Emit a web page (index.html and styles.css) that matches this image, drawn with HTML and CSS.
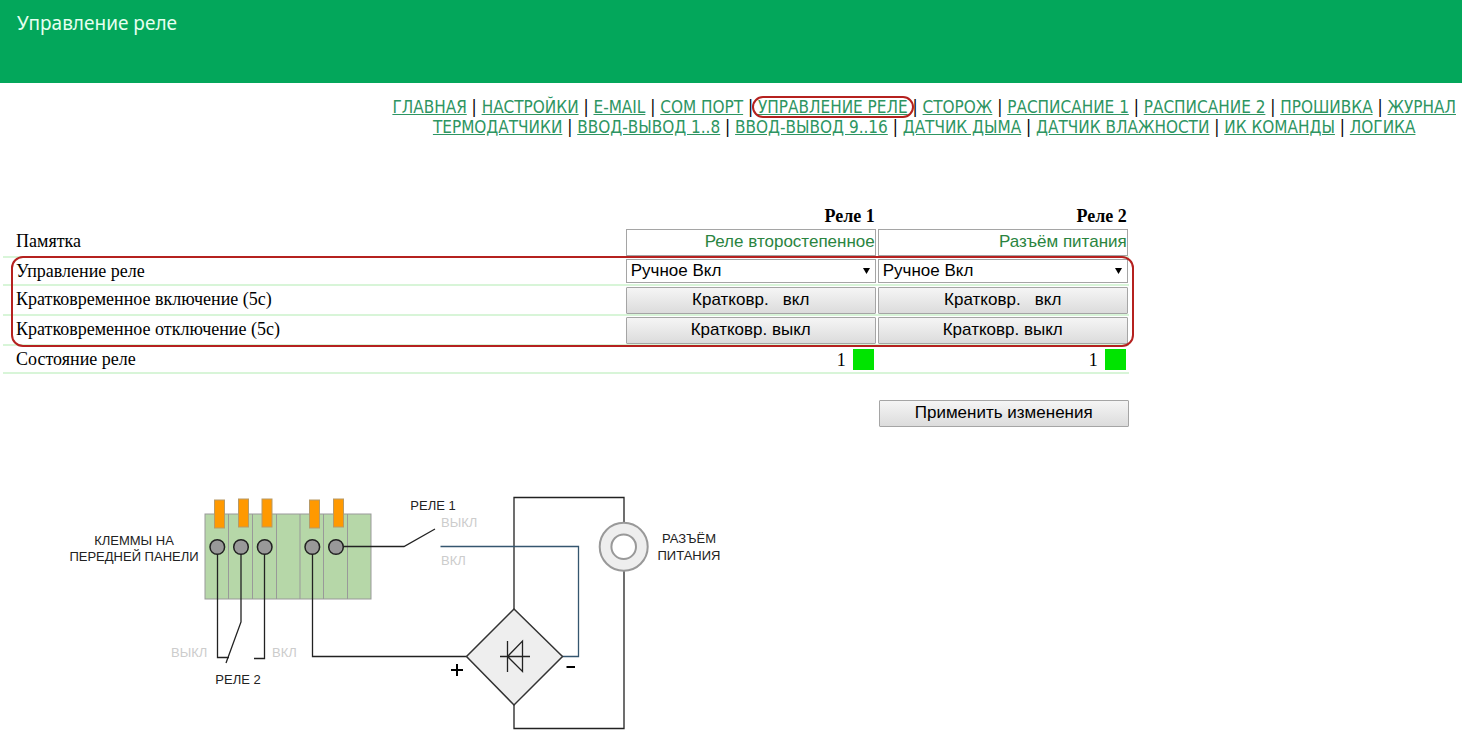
FILE: index.html
```html
<!DOCTYPE html>
<html lang="ru">
<head>
<meta charset="utf-8">
<title>Управление реле</title>
<link rel="stylesheet" href="styles.css">
</head>
<body>
<header class="banner"><h1 class="banner-title">Управление реле</h1></header>
<nav class="menu">
  <div class="menu-lines">
    <div><a href="#">ГЛАВНАЯ</a> | <a href="#">НАСТРОЙКИ</a> | <a href="#">E-MAIL</a> | <a href="#">COM ПОРТ</a> | <a href="#" class="current">УПРАВЛЕНИЕ РЕЛЕ</a> | <a href="#">СТОРОЖ</a> | <a href="#">РАСПИСАНИЕ 1</a> | <a href="#">РАСПИСАНИЕ 2</a> | <a href="#">ПРОШИВКА</a> | <a href="#">ЖУРНАЛ</a></div>
    <div><a href="#">ТЕРМОДАТЧИКИ</a> | <a href="#">ВВОД-ВЫВОД 1..8</a> | <a href="#">ВВОД-ВЫВОД 9..16</a> | <a href="#">ДАТЧИК ДЫМА</a> | <a href="#">ДАТЧИК ВЛАЖНОСТИ</a> | <a href="#">ИК КОМАНДЫ</a> | <a href="#">ЛОГИКА</a></div>
  </div>
</nav>
<main>
  <form class="settings">
    <table class="relays">
      <colgroup><col><col class="relay-col"><col class="relay-col"></colgroup>
      <thead>
        <tr><td></td><th scope="col">Реле 1</th><th scope="col">Реле 2</th></tr>
      </thead>
      <tbody>
        <tr>
          <th scope="row">Памятка</th>
          <td><input class="field memo" type="text" aria-label="Памятка, реле 1" value="Реле второстепенное"></td>
          <td><input class="field memo" type="text" aria-label="Памятка, реле 2" value="Разъём питания"></td>
        </tr>
      </tbody>
      <tbody class="outlined">
        <tr>
          <th scope="row">Управление реле</th>
          <td><div class="picker"><select class="field mode" aria-label="Управление реле 1"><option>Ручное Вкл</option></select><svg class="arrow" viewBox="0 0 7 6" aria-hidden="true"><path d="M0 0H7L3.5 6Z"/></svg></div></td>
          <td><div class="picker"><select class="field mode" aria-label="Управление реле 2"><option>Ручное Вкл</option></select><svg class="arrow" viewBox="0 0 7 6" aria-hidden="true"><path d="M0 0H7L3.5 6Z"/></svg></div></td>
        </tr>
        <tr>
          <th scope="row">Кратковременное включение (5с)</th>
          <td><button class="field push" type="button">Кратковр. &nbsp; вкл</button></td>
          <td><button class="field push" type="button">Кратковр. &nbsp; вкл</button></td>
        </tr>
        <tr>
          <th scope="row">Кратковременное отключение (5с)</th>
          <td><button class="field push" type="button">Кратковр. выкл</button></td>
          <td><button class="field push" type="button">Кратковр. выкл</button></td>
        </tr>
      </tbody>
      <tbody>
        <tr>
          <th scope="row">Состояние реле</th>
          <td><div class="state">1<span class="lamp"></span></div></td>
          <td><div class="state">1<span class="lamp"></span></div></td>
        </tr>
      </tbody>
    </table>
    <button class="field push apply" type="submit">Применить изменения</button>
  </form>
  <svg class="scheme" viewBox="60 490 670 245" width="670" height="245" role="img" aria-label="Схема подключения реле">
    <rect class="block" x="205" y="514" width="166" height="85"/>
    <path class="seam" d="M228.5 514V599M252.5 514V599M276.5 514V599M300 514V599M323.500 514V599M347.500 514V599"/>
    <g class="pin">
      <rect x="214.500" y="500" width="10" height="28"/>
      <rect x="238.500" y="499" width="10" height="28"/>
      <rect x="262" y="499" width="10" height="28"/>
      <rect x="309.500" y="500" width="10" height="28"/>
      <rect x="333.500" y="499" width="10" height="28"/>
    </g>
    <g class="wire">
      <path d="M217.500 547V657.500H229M241 547V622L226 663M264.500 547V658.500H254M312.500 547V656.500H466.500M336 546.500H404L435 529"/>
      <path d="M514 609V497.500H624V523M514 705V728.500H624V571"/>
    </g>
    <path class="wire wire-blue" d="M440.500 546.500H578.500V656.500H562"/>
    <g class="screw">
      <circle cx="217.300" cy="547" r="7.300"/><circle cx="241" cy="547" r="7.300"/><circle cx="264.700" cy="547" r="7.300"/><circle cx="312.300" cy="547" r="7.300"/><circle cx="336" cy="547" r="7.300"/>
    </g>
    <path class="bridge" d="M514 609L562.500 656.500L514 705L466.500 656.500Z"/>
    <path class="wire" d="M500 656.500H530M507.500 641V672M522.500 641V671.500L507.500 656.500Z"/>
    <circle class="jack" cx="623.700" cy="546.700" r="24"/>
    <circle class="jack hole" cx="623.700" cy="546.700" r="12.300"/>
    <path class="sign" d="M451 670H463M457 664V676M566.500 667H575"/>
    <g class="caption">
      <text x="134" y="545" text-anchor="middle">КЛЕММЫ НА</text>
      <text x="134" y="561" text-anchor="middle">ПЕРЕДНЕЙ ПАНЕЛИ</text>
      <text x="433" y="510" text-anchor="middle">РЕЛЕ 1</text>
      <text x="238" y="684" text-anchor="middle">РЕЛЕ 2</text>
      <text x="689" y="543" text-anchor="middle">РАЗЪЁМ</text>
      <text x="689" y="560" text-anchor="middle">ПИТАНИЯ</text>
    </g>
    <g class="caption faint">
      <text x="441" y="527">ВЫКЛ</text>
      <text x="441" y="565">ВКЛ</text>
      <text x="171" y="657">ВЫКЛ</text>
      <text x="272" y="657">ВКЛ</text>
    </g>
  </svg>
</main>
</body>
</html>
```
FILE: styles.css
```css
* { box-sizing: border-box; }
body {
  margin: 0;
  background: #fff;
  color: #000;
  font: 18px/20px "Liberation Serif", "Times New Roman", serif;
}
.banner {
  min-height: 83px;
  padding: 11px 17px;
  background: #03a75b;
}
.banner-title {
  margin: 0;
  color: #e6fff0;
  font: 19px/24px "Noto Sans", Tahoma, sans-serif;
}
.menu {
  display: flex;
  justify-content: flex-end;
  padding: 14px 6px 0;
  font: 17px/20px "DejaVu Sans Condensed", Tahoma, sans-serif;
}
.menu-lines { text-align: center; }
.menu a { color: #2e9562; }
.current { position: relative; }
.current::after {
  content: "";
  position: absolute;
  inset: -1px -6px;
  border: 2px solid #b5211f;
  border-radius: 12px;
}
.settings {
  display: flex;
  flex-direction: column;
  width: 77%;
  margin: 68px 0 0 3px;
}
.relays {
  width: 100%;
  table-layout: fixed;
  border-collapse: separate;
  border-spacing: 0;
}
.relay-col { width: 252px; }
.relays td, .relays th {
  height: 28px;
  padding: 1px 1px 0;
  border-bottom: 2px solid #d8f5d8;
  text-align: right;
  vertical-align: top;
}
.relays thead td, .relays thead th {
  height: 23px;
  padding: 1px 2px;
  border: 0;
}
.relays tbody th {
  padding: 3px 13px;
  font-weight: normal;
  text-align: left;
}
.outlined { position: relative; }
.outlined::after {
  content: "";
  position: absolute;
  inset: -2px -5px -1px 8px;
  border: 2px solid #b5211f;
  border-radius: 12px;
  pointer-events: none;
}
.field {
  display: block;
  width: 100%;
  height: 27px;
  margin: 0;
  border: 1px solid #a5a5a5;
  border-radius: 0;
  background: #fff;
  color: #000;
  font: 17px/20px "Liberation Sans", Arial, sans-serif;
}
.memo {
  padding: 0 0 2px;
  color: #2a8440;
  text-align: right;
}
.picker { position: relative; }
.mode {
  height: 24px;
  padding: 0 4px;
  appearance: none;
}
.arrow {
  position: absolute;
  top: 9px;
  right: 6px;
  width: 7px;
  height: 6px;
  pointer-events: none;
}
.push {
  padding: 0 0 2px;
  border-radius: 1px;
  background: linear-gradient(#f5f5f5, #dcdcdc);
}
.state {
  display: flex;
  justify-content: flex-end;
  align-items: center;
  gap: 7px;
  padding: 2px;
}
.lamp {
  width: 21px;
  height: 21px;
  background: #00e400;
}
.apply {
  align-self: flex-end;
  width: 250px;
  margin-top: 26px;
}
.scheme {
  display: block;
  max-width: 100%;
  margin: 63px 0 0 60px;
}
.block { fill: #b6d7a8; stroke: #999; }
.seam { stroke: #999; }
.pin { fill: #ff9900; stroke: #b79a66; }
.screw { fill: #999; stroke: #222; stroke-width: 1.500; }
.wire { fill: none; stroke: #222; stroke-width: 1.300; }
.wire-blue { stroke: #35566f; }
.bridge { fill: #eee; stroke: #333; stroke-width: 1.500; }
.jack { fill: #eee; stroke: #999; stroke-width: 2; }
.hole { fill: #fff; }
.sign { stroke: #000; stroke-width: 2; }
.caption { fill: #222; font: 13px "Liberation Sans", Arial, sans-serif; }
.faint { fill: #ccc; }
```
